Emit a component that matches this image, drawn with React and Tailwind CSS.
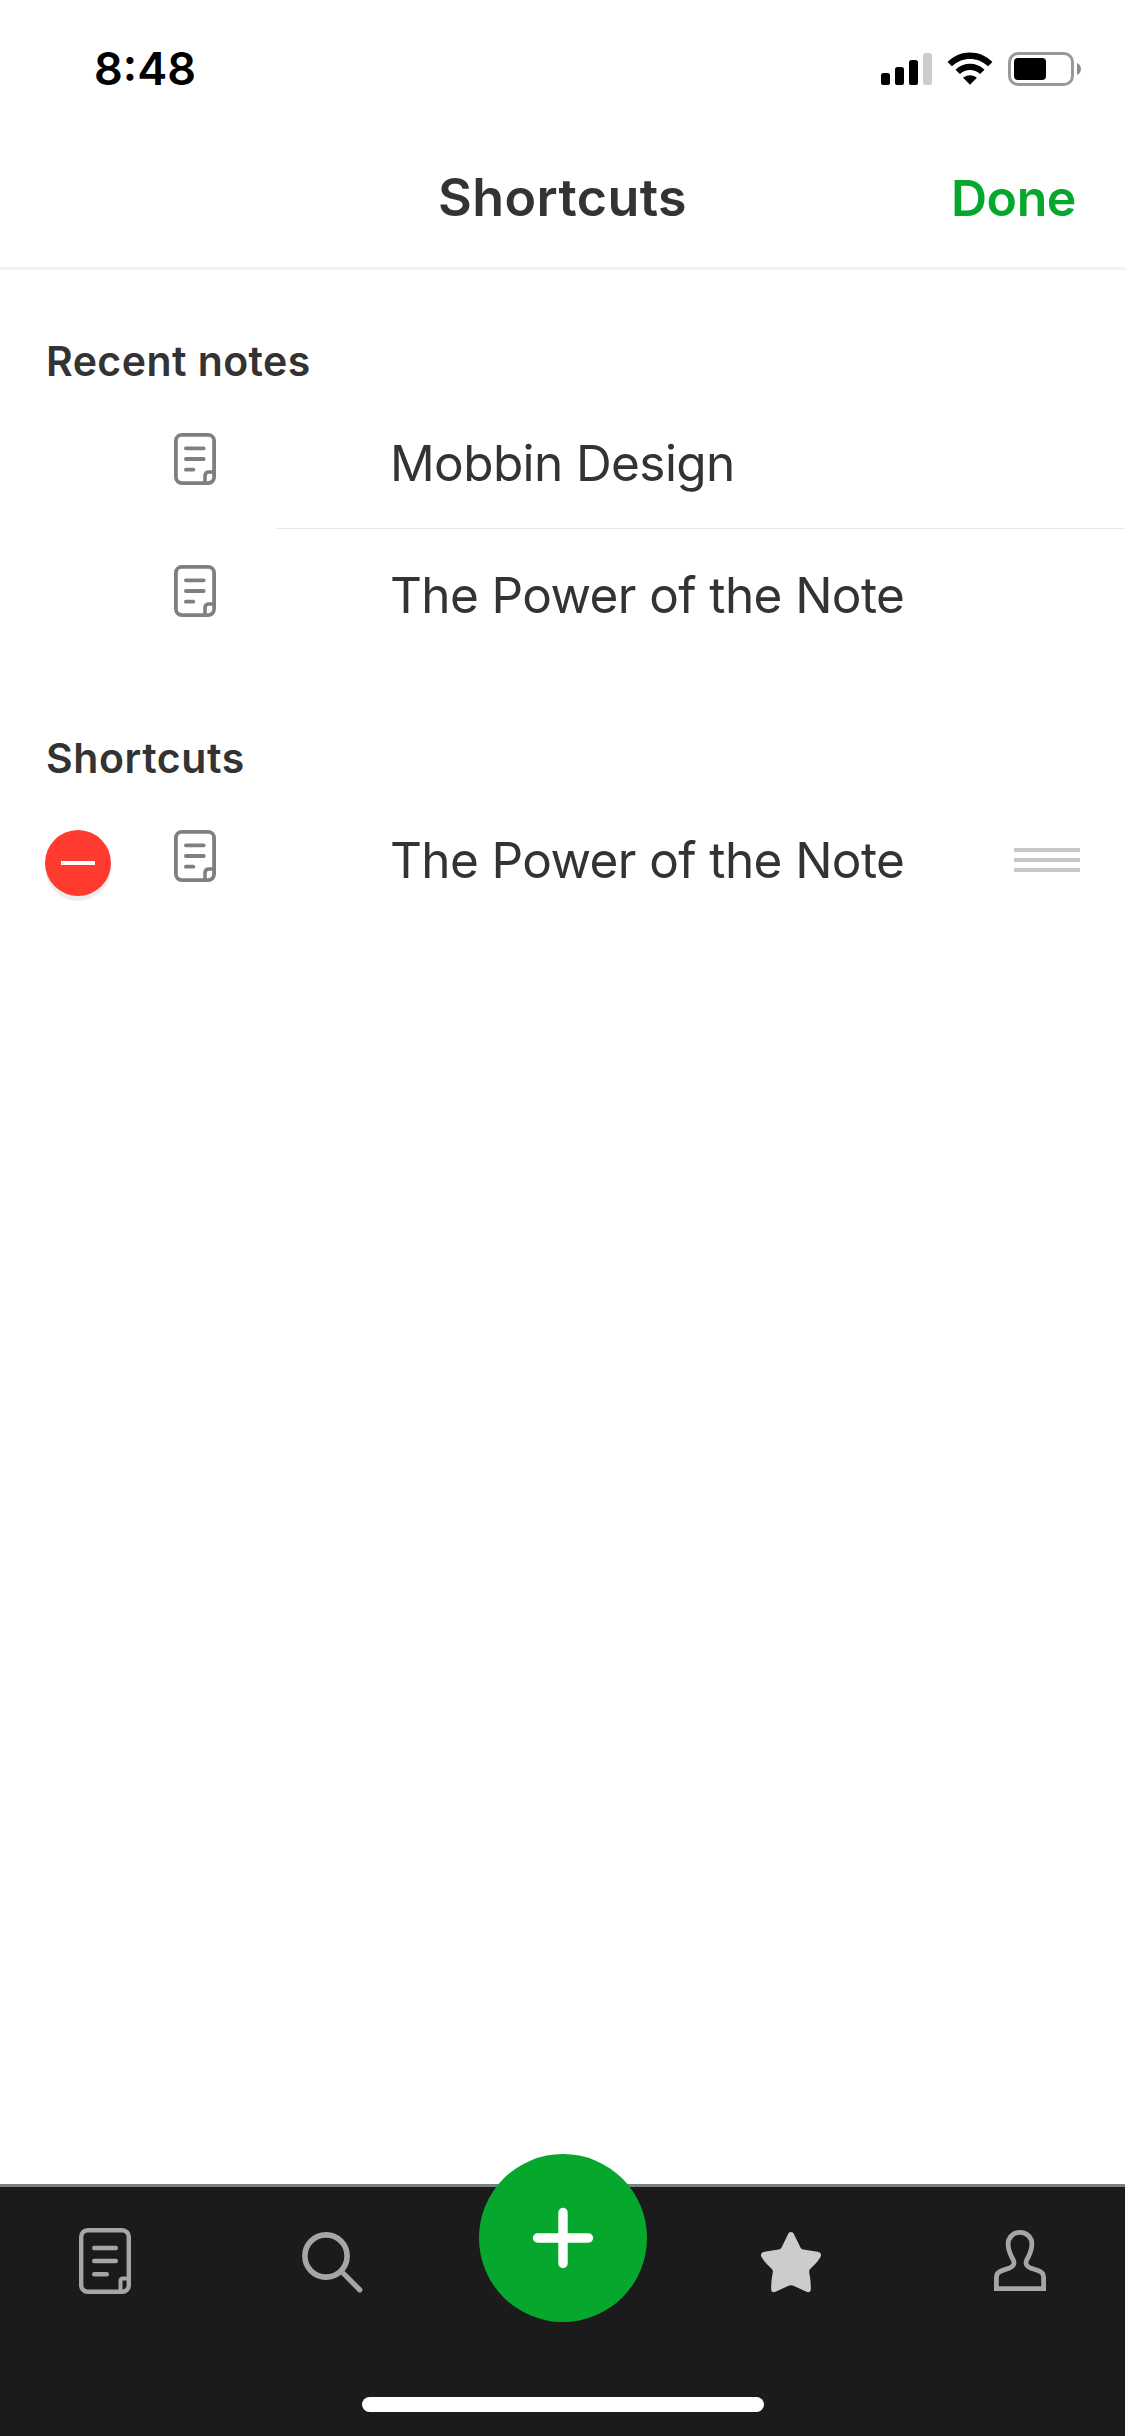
import React from "react";

function SignalIcon() {
  return (
    <svg width="52" height="34" viewBox="0 0 52 34">
      <rect x="0" y="21" width="9" height="12" rx="2.6" fill="#000" />
      <rect x="14" y="15" width="9" height="18" rx="2.6" fill="#000" />
      <rect x="28" y="8" width="9" height="25" rx="2.6" fill="#000" />
      <rect x="42" y="1" width="9" height="32" rx="2.6" fill="#ccc" />
    </svg>
  );
}

function WifiIcon() {
  return (
    <svg width="46" height="34" viewBox="0 0 46 34">
      <path d="M0.6 9.9C13.2 -2.6 32.8 -2.6 45.4 9.9L41.1 14.3C31 4.4 15 4.4 4.9 14.3Z" fill="#000" />
      <path d="M8.5 17.7C16.6 9.8 29.4 9.8 37.5 17.7L33.1 22.1C27.4 16.7 18.6 16.7 12.9 22.1Z" fill="#000" />
      <path d="M16.1 25.8C20 22.3 26 22.3 29.9 25.8L23 32.8Z" fill="#000" />
    </svg>
  );
}

function BatteryIcon() {
  return (
    <svg width="74" height="34" viewBox="0 0 74 34">
      <rect x="1.5" y="1.5" width="63" height="31" rx="8.5" fill="none" stroke="#999" strokeWidth="3" />
      <rect x="6" y="6" width="32" height="22" rx="4" fill="#000" />
      <path d="M69 11C74.3 13 74.3 21 69 23Z" fill="#8c8c8c" />
    </svg>
  );
}

function StatusBar() {
  return (
    <div className="flex h-[138px] items-center pl-[94px] pr-[43px]">
      <span className="text-[45px] font-semibold leading-[54px] text-black">8:48</span>
      <div className="ml-auto flex items-center">
        <SignalIcon />
        <span className="ml-[14px]"><WifiIcon /></span>
        <span className="ml-[15px]"><BatteryIcon /></span>
      </div>
    </div>
  );
}

function Header() {
  return (
    <header className="grid h-[132px] grid-cols-3 items-center border-b-[3px] border-[#f2f2f2] pb-[10px]">
      <h1 className="col-start-2 text-center text-[52px] font-semibold leading-[60px] tracking-[0.4px] text-[#333336]">Shortcuts</h1>
      <button className="pr-[49px] text-right text-[50px] font-semibold leading-[60px] tracking-[-0.4px] text-[#05a82d]">Done</button>
    </header>
  );
}

function RowNoteIcon() {
  return (
    <svg width="42" height="52" viewBox="0 0 42 52" fill="none" stroke="#7c8083" strokeWidth="3.8">
      <rect x="1.9" y="1.9" width="38.2" height="48.2" rx="6" />
      <path d="M11.9 15.3H29.7M11.9 26H29.7M11.9 36.7H19.3" strokeLinecap="round" />
      <path d="M31 50V43Q31 39 35 39H40" strokeWidth="3.6" />
    </svg>
  );
}

function Row({ title, divided, editable }) {
  return (
    <div className="flex h-[132px]">
      <div className="flex w-[276px] pl-[45px] pt-[37px]">
        <div className="size-[66px]">
          {editable && (
            <div className="flex size-[66px] items-center justify-center rounded-full bg-[#ff3b30] shadow-[0_5px_1px_rgba(0,0,0,0.07)]">
              <div className="h-[4px] w-[34px] bg-white" />
            </div>
          )}
        </div>
        <div className="ml-[63px]"><RowNoteIcon /></div>
      </div>
      <div className={divided ? "flex flex-1 border-t border-[#e8e8e8] pl-[114px] pr-[45px] pt-[36px]" : "flex flex-1 pl-[114px] pr-[45px] pt-[37px]"}>
        <span className="whitespace-nowrap text-[49.5px] leading-[60px] tracking-[-0.6px] text-[#333]">{title}</span>
        {editable && (
          <div className="ml-auto flex flex-col gap-[6px] pt-[18px]">
            <div className="h-[4px] w-[66px] bg-[#c7c7c7]" />
            <div className="h-[4px] w-[66px] bg-[#c7c7c7]" />
            <div className="h-[4px] w-[66px] bg-[#c7c7c7]" />
          </div>
        )}
      </div>
    </div>
  );
}

function TabBar() {
  return (
    <nav className="flex h-[252px] flex-col border-t-[3px] border-[#7b8084] bg-[#1b1b1b]">
      <div className="flex h-[210px] items-start pl-[79px]">
        <svg className="mt-[41px]" width="52" height="66" viewBox="0 0 52 66" fill="none" stroke="#a6a6a6" strokeWidth="4.4">
          <rect x="2.2" y="2.2" width="47.6" height="61.6" rx="6.5" />
          <path d="M15.2 20H36.8M15.2 33H36.8M15.2 46.2H27.8" strokeLinecap="round" />
          <path d="M41.5 64V53Q41.5 50.5 44 50.5H50" strokeWidth="4" />
        </svg>
        <svg className="ml-[171px] mt-[44px]" width="61" height="62" viewBox="0 0 61 62" fill="none" stroke="#a6a6a6">
          <circle cx="24" cy="25" r="21.1" strokeWidth="5.6" />
          <path d="M40 41L57.8 58.8" strokeWidth="5.2" strokeLinecap="round" />
        </svg>
        <div className="-mt-[33px] ml-[116px] flex size-[168px] items-center justify-center rounded-full bg-[#05a82d]">
          <svg width="62" height="62" viewBox="0 0 62 62" stroke="#fff" strokeWidth="9.4" strokeLinecap="round">
            <path d="M31 5.5V56.5M5.5 31H56.5" />
          </svg>
        </div>
        <svg className="ml-[114px] mt-[45px]" width="60" height="61" viewBox="0 0 60 61">
          <path d="M30 0C31.4 0 32.4 .9 33 2.2L39.2 15C39.9 16.5 40.9 17.4 42.4 17.6L56.5 19.7C60 20.3 61 23.2 59 25.8C56.3 30.5 52.8 33.4 49.4 36.8C48.3 37.9 47.9 39 48.2 40.5C49.3 46 49.9 51.5 49.8 57.5C49.7 60 47.8 60.7 45.5 59.8L32.5 53.8C30.8 53 29.2 53 27.5 53.8L14.5 59.8C12.2 60.7 10.3 60 10.2 57.5C10.1 51.5 10.7 46 11.8 40.5C12.1 39 11.7 37.9 10.6 36.8C7.2 33.4 3.7 30.5 1 25.8C-1 23.2 0 20.3 3.5 19.7L17.6 17.6C19.1 17.4 20.1 16.5 20.8 15L27 2.2C27.6 .9 28.6 0 30 0Z" fill="#ccc" />
        </svg>
        <svg className="ml-[173px] mt-[43px]" width="52" height="61" viewBox="0 0 52 61" fill="none" stroke="#a6a6a6" strokeWidth="4.8">
          <path d="M2.4 58.6V47.5C2.4 43.5 4.4 41.8 8 40.6L15.5 38C19.5 36.5 21 33.5 19.2 29.8C16.5 25 14.1 20.5 14.1 14.2C14.1 7.3 19.1 2.4 26 2.4C32.9 2.4 37.9 7.3 37.9 14.2C37.9 20.5 35.5 25 32.8 29.8C31 33.5 32.5 36.5 36.5 38L44 40.6C47.6 41.8 49.6 43.5 49.6 47.5V58.6Z" />
        </svg>
      </div>
      <div className="ml-[362px] h-[15px] w-[402px] rounded-full bg-white" />
    </nav>
  );
}

export default function App() {
  return (
    <div className="flex h-[2436px] w-[1125px] flex-col overflow-hidden bg-white font-['Inter',sans-serif]">
      <StatusBar />
      <Header />
      <main className="flex-1">
        <h2 className="h-[126px] pl-[46px] pt-[66px] text-[41px] font-semibold leading-[51px] tracking-[0.45px] text-[#333]">Recent notes</h2>
        <Row title="Mobbin Design" />
        <Row title="The Power of the Note" divided />
        <h2 className="h-[133px] pl-[46px] pt-[73px] text-[41px] font-semibold leading-[51px] tracking-[0.6px] text-[#333]">Shortcuts</h2>
        <Row title="The Power of the Note" editable />
      </main>
      <TabBar />
    </div>
  );
}
